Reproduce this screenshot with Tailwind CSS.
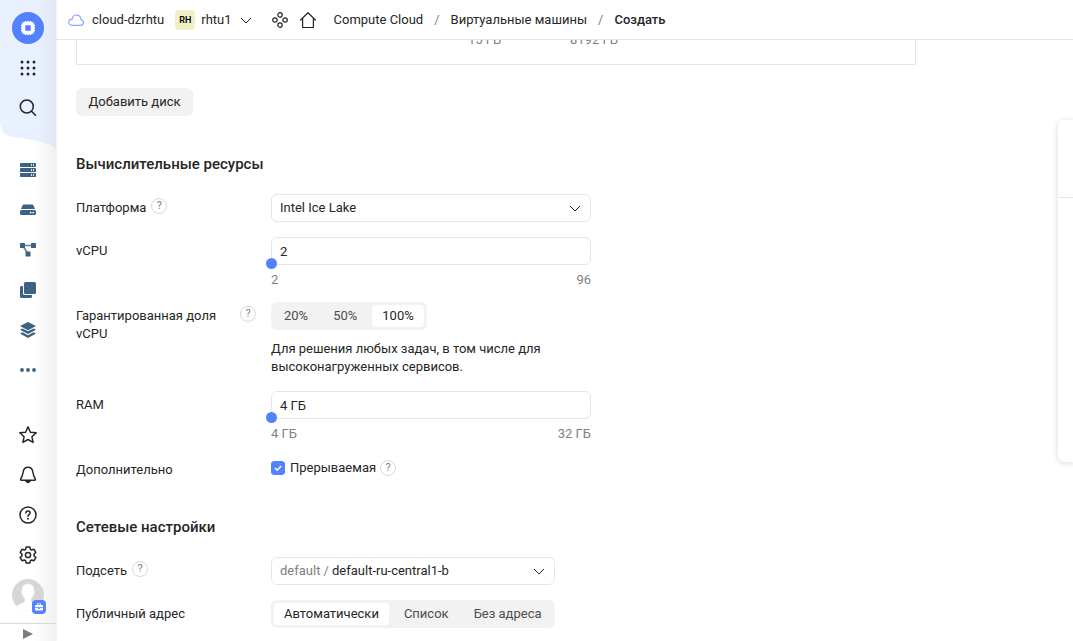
<!DOCTYPE html>
<html lang="ru">
<head>
<meta charset="utf-8">
<meta name="viewport" content="width=device-width, initial-scale=1">
<title>Compute Cloud — Создать</title>
<script src="https://cdn.jsdelivr.net/npm/@tailwindcss/browser@4"></script>
</head>
<body class="flex h-screen overflow-hidden bg-white font-['Roboto','Noto_Sans',sans-serif] text-[13px] leading-[18px] text-[#262626]">

<nav aria-label="Сервисы" class="relative z-20 flex w-14 shrink-0 flex-col bg-linear-to-r from-white from-60% to-[#f0f0f0] shadow-[0_0_2px_rgba(0,0,0,0.16)]">
  <svg class="absolute top-0 left-0 -z-10 h-[150px] w-full" viewBox="0 0 56 150" preserveAspectRatio="none" aria-hidden="true">
    <defs><linearGradient id="top" x1="0" x2="1"><stop offset="0" stop-color="#e9f1ff"/><stop offset=".7" stop-color="#e9f0fe"/><stop offset="1" stop-color="#dfe6f4"/></linearGradient></defs>
    <path fill="url(#top)" d="M0 0h56v149C48 142 36 140 14 137 5 136 1 132 0 122z"/>
  </svg>
  <div class="flex flex-col items-center pt-2">
    <a href="#" aria-label="Compute Cloud" class="my-1 grid size-8 place-items-center rounded-full bg-[#5282ff] text-white">
      <svg class="size-4" viewBox="0 0 16 16" fill="currentColor"><path fill-rule="evenodd" d="M4 2h.8V1h1.700v1H7.200V1h1.600v1h.7V1h1.700v1H12q2 0 2 2v.8h1v1.700h-1v.7h1v1.600h-1v.7h1v1.700h-1V12q0 2-2 2h-.8v1H9.500v-1h-.7v1H7.200v-1h-.7v1H4.800v-1H4q-2 0-2-2v-.8H1V9.500h1v-.7H1V7.200h1v-.7H1V4.800h1V4q0-2 2-2zm1.300 3.300v5.400h5.400V5.300z"/></svg>
    </a>
    <button aria-label="Все сервисы" class="grid size-10 place-items-center">
      <svg class="size-4" viewBox="0 0 16 16" fill="#262626"><circle cx="2" cy="2" r="1.500"/><circle cx="8" cy="2" r="1.500"/><circle cx="14" cy="2" r="1.500"/><circle cx="2" cy="8" r="1.500"/><circle cx="8" cy="8" r="1.500"/><circle cx="14" cy="8" r="1.500"/><circle cx="2" cy="14" r="1.500"/><circle cx="8" cy="14" r="1.500"/><circle cx="14" cy="14" r="1.500"/></svg>
    </button>
    <button aria-label="Поиск" class="grid size-10 place-items-center">
      <svg class="size-[18px]" viewBox="0 0 18 18" fill="none" stroke="#262626" stroke-width="1.500" stroke-linecap="round"><circle cx="7.800" cy="7.500" r="6.500"/><path d="m12.500 12.200 4 4"/></svg>
    </button>
  </div>
  <div class="mt-[22px] flex flex-col items-center text-[#3c6182]">
    <a href="#" aria-label="Виртуальные машины" class="grid size-10 place-items-center">
      <svg class="size-4" viewBox="0 0 16 16" fill="currentColor"><rect y="1" width="16" height="4" rx=".8"/><rect y="6" width="16" height="4" rx=".8"/><rect y="11" width="16" height="4" rx=".8"/><path stroke="#fff" stroke-opacity=".8" d="M11.500 2v2M13.500 2v2M11.500 7v2M13.500 7v2M11.500 12v2M13.500 12v2"/></svg>
    </a>
    <a href="#" aria-label="Диски" class="grid size-10 place-items-center">
      <svg class="size-4" viewBox="0 0 16 16" fill="currentColor"><path d="M4 2.500h8q1 0 1.500 1L15 7H1l1.500-3.500q.5-1 1.500-1zM1.500 8h13Q16 8 16 9.500v2q0 1.500-1.500 1.500h-13Q0 13 0 11.500v-2Q0 8 1.500 8z"/><circle cx="10.700" cy="10.600" r=".9" fill="#fff"/><circle cx="13.300" cy="10.600" r=".9" fill="#fff"/></svg>
    </a>
    <a href="#" aria-label="Балансировщики" class="grid size-10 place-items-center">
      <svg class="size-4" viewBox="0 0 16 16" fill="currentColor"><path fill="none" stroke="currentColor" stroke-opacity=".8" stroke-width="1.600" d="M3 3.500h10M3 4l4.500 7"/><rect y="1" width="5" height="5" rx=".6"/><rect x="11" y="1" width="5" height="5" rx=".6"/><rect x="5.500" y="9.500" width="5" height="5" rx=".6"/></svg>
    </a>
    <a href="#" aria-label="Образы" class="grid size-10 place-items-center">
      <svg class="size-4" viewBox="0 0 16 16" fill="currentColor"><rect x="4" width="12" height="12" rx="1.500"/><path d="M1.500 4H3v7.500Q3 13 4.500 13H12v1.500q0 1.500-1.500 1.500h-9Q0 16 0 14.500v-9Q0 4 1.500 4z"/></svg>
    </a>
    <a href="#" aria-label="Снимки" class="grid size-10 place-items-center">
      <svg class="size-4" viewBox="0 0 16 16" fill="currentColor"><path d="m8 0 8 4-8 4.200L0 4z"/><path d="m0 7.800 2.500-1.300L8 9.300l5.500-2.800L16 7.800 8 12z"/><path d="m0 11.600 2.500-1.300L8 13.200l5.500-2.900 2.500 1.300L8 16z"/></svg>
    </a>
    <button aria-label="Ещё" class="grid size-10 place-items-center">
      <svg class="size-4" viewBox="0 0 16 16" fill="currentColor"><circle cx="2" cy="8" r="1.900"/><circle cx="8" cy="8" r="1.900"/><circle cx="14" cy="8" r="1.900"/></svg>
    </button>
  </div>
  <div class="mt-auto flex flex-col items-center text-[#262626]">
    <button aria-label="Избранное" class="grid size-10 place-items-center">
      <svg class="size-[18px]" viewBox="0 0 18 18" fill="none" stroke="currentColor" stroke-width="1.500" stroke-linejoin="round"><path d="m9 .9 2.400 5.300 5.800.6-4.300 3.900 1.200 5.700L9 13.500l-5.100 2.900 1.200-5.700L.8 6.800l5.800-.6z"/></svg>
    </button>
    <button aria-label="Уведомления" class="grid size-10 place-items-center">
      <svg class="size-[18px]" viewBox="0 0 18 18" fill="none" stroke="currentColor" stroke-width="1.500" stroke-linejoin="round"><path d="M9 1.200c2.800 0 4.300 1.800 4.700 4.300.5 3.300 1 4.800 2.600 7.700.3.600 0 1-.6 1H2.300c-.6 0-.9-.4-.6-1 1.600-2.900 2.100-4.400 2.600-7.700C4.700 3 6.200 1.200 9 1.200z"/><path fill="currentColor" stroke="none" d="M6 14.800h6q-1 2.400-3 2.400t-3-2.400z"/></svg>
    </button>
    <button aria-label="Помощь" class="grid size-10 place-items-center">
      <svg class="size-[18px]" viewBox="0 0 18 18" fill="none" stroke="currentColor" stroke-width="1.500" stroke-linecap="round"><circle cx="9" cy="9" r="8"/><path d="M6.900 7.100c0-1.300.9-2.100 2.100-2.100s2.100.8 2.100 1.900c0 1.500-2.100 1.500-2.100 3.300"/><circle cx="9" cy="12.700" r=".95" fill="currentColor" stroke="none"/></svg>
    </button>
    <button aria-label="Настройки" class="grid size-10 place-items-center">
      <svg class="size-[18px]" viewBox="0 0 18 18" fill="none" stroke="currentColor" stroke-width="1.500" stroke-linejoin="round"><circle cx="9" cy="9" r="2.600"/><path d="M7.200.9h3.600l.6 2.400 1.200.7 2.400-.7 1.800 3.100L15 8.200v1.600l1.800 1.800-1.800 3.100-2.400-.7-1.200.7-.6 2.400H7.200l-.6-2.400-1.200-.7-2.400.7-1.800-3.100L3 9.800V8.200L1.200 6.400 3 3.300l2.400.7 1.200-.7z"/></svg>
    </button>
    <button aria-label="Профиль" class="relative mt-1 mb-3 size-8">
      <svg class="size-8" viewBox="0 0 32 32"><defs><clipPath id="av"><circle cx="16" cy="16" r="16"/></clipPath></defs><g clip-path="url(#av)"><path fill="#d6d6d6" d="M0 0h32v32H0z"/><path fill="#fff" stroke="#ececec" d="M16 5c4.500 0 6.200 3 6 7 1 .3.800 2.800-.6 3.500-.5 2.400-1.400 3.600-2.400 4.500 0 3 1 3.600 4 4.800 4 1.600 6 3 6 8.200H2c0-4 2-6.500 7-8.200 3-1.200 4-2 4-4.800-1-.9-1.900-2.100-2.400-4.500C9.200 14.800 9 12.300 10 12c-.2-4 1.500-7 6-7z"/></g></svg>
      <span class="absolute top-[21px] left-5 grid size-[14px] place-items-center rounded-sm bg-[#5282ff]">
        <svg class="size-2" viewBox="0 0 8 8"><path fill="#fff" fill-rule="evenodd" d="M2 2V.5h4V2h1q1 0 1 1v1.200H0V3q0-1 1-1zm.8-.8V2h2.400v-.8zM0 5h3v.7h2V5h3v1.500q0 1-1 1H1q-1 0-1-1z"/></svg>
      </span>
    </button>
  </div>
  <button aria-label="Развернуть" class="grid h-[18px] shrink-0 place-items-center border-t border-[#d9d9d9]">
    <svg class="mt-0.5 h-2.5 w-2.5" viewBox="0 0 10 10"><path fill="#7d7d7d" d="M0 0v10l10-5z"/></svg>
  </button>
</nav>

<div class="flex min-w-0 flex-1 flex-col">
  <header class="z-10 flex h-10 shrink-0 items-center border-b border-[#e5e5e5] bg-white pl-3">
    <svg class="h-4 w-4" viewBox="0 0 16 16" fill="none" stroke="#86a8ff" stroke-width="1.200"><path d="M3.800 13.400h8.400c4 0 4.300-5 .8-5.800C12.800 2 5 1.200 4.200 7.100-.5 7.400-.2 13.400 3.800 13.400z"/></svg>
    <a href="#" class="ml-2">cloud-dzrhtu</a>
    <span class="ml-[11px] grid size-5 place-items-center rounded-sm bg-[#eff0c8] text-[9px] font-semibold text-black">RH</span>
    <button class="ml-1.5 flex items-center gap-2">rhtu1
      <svg class="size-3" viewBox="0 0 12 12" fill="none" stroke="#262626"><path d="m1 4 5 5 5-5"/></svg>
    </button>
    <a href="#" aria-label="Организация" class="ml-5">
      <svg class="size-4" viewBox="0 0 16 16" fill="none" stroke="#262626" stroke-width="1.200"><circle cx="8" cy="2.900" r="2.200"/><circle cx="8" cy="13.100" r="2.200"/><circle cx="2.900" cy="8" r="2.200"/><circle cx="13.100" cy="8" r="2.200"/></svg>
    </a>
    <a href="#" aria-label="Главная" class="ml-3">
      <svg class="size-4" viewBox="0 0 16 16" fill="none" stroke="#262626" stroke-width="1.200" stroke-linecap="round" stroke-linejoin="round"><path d="M.6 8 8 .8 15.400 8M2.600 6.500v9h10.800v-9"/></svg>
    </a>
    <nav aria-label="Путь" class="ml-[18px] flex gap-[11px]">
      <a href="#">Compute Cloud</a><span class="text-[#808080]">/</span>
      <a href="#">Виртуальные машины</a><span class="text-[#808080]">/</span>
      <a href="#" aria-current="page" class="font-medium">Создать</a>
    </nav>
  </header>

  <main class="flex min-h-0 flex-1 items-start overflow-hidden">
    <form class="min-w-0 flex-1 pl-5">
      <div class="-mt-2.5 flex max-w-[840px] border border-[#e5e5e5] pb-[15px] text-[#808080]">
        <span class="ml-[391px] w-[102px]">15 ГБ</span><span>8192 ГБ</span>
      </div>
      <button type="button" class="mt-[23px] h-7 min-w-[117px] rounded-md bg-[#f2f2f2] px-3">Добавить диск</button>

      <h2 class="mt-[38px] mb-5 text-[15px] leading-5 font-medium">Вычислительные ресурсы</h2>

      <div class="mb-[15px] flex items-start">
        <div class="mr-[15px] flex w-[180px] shrink-0 items-start gap-[5px]">
          <label for="platform" class="pt-[5px]">Платформа</label>
          <button type="button" aria-label="Справка: платформа" class="mt-1 size-4 shrink-0 rounded-full border border-[#d9d9d9] text-[11px] leading-[14px] text-[#808080]">?</button>
        </div>
        <div class="relative w-80">
          <select id="platform" class="h-7 w-full appearance-none rounded-md border border-[#e5e5e5] bg-white px-2"><option>Intel Ice Lake</option></select>
          <svg class="pointer-events-none absolute top-2 right-2.5 size-3" viewBox="0 0 12 12" fill="none" stroke="#262626"><path d="m1 4 5 5 5-5"/></svg>
        </div>
      </div>

      <div class="mb-[15px] flex items-start">
        <label for="vcpu" class="mr-[15px] w-[180px] shrink-0 pt-[5px]">vCPU</label>
        <div class="relative w-80">
          <input id="vcpu" value="2" class="block h-7 w-full rounded-md border border-[#e5e5e5] bg-white px-2">
          <input type="range" aria-label="vCPU" min="2" max="96" value="2" class="absolute top-[21px] -left-[5px] h-[11px] w-[330px] appearance-none bg-transparent [&::-webkit-slider-thumb]:size-[11px] [&::-webkit-slider-thumb]:appearance-none [&::-webkit-slider-thumb]:rounded-full [&::-webkit-slider-thumb]:bg-[#5282ff]">
          <div class="mt-[7px] -mb-px flex justify-between leading-4 text-[#808080]"><span>2</span><span>96</span></div>
        </div>
      </div>

      <div class="mb-[15px] flex items-start">
        <div class="mr-[15px] flex w-[180px] shrink-0 items-start gap-[5px]">
          <span id="share" class="pt-[5px]">Гарантированная доля vCPU</span>
          <button type="button" aria-label="Справка: доля vCPU" class="mt-1 size-4 shrink-0 rounded-full border border-[#d9d9d9] text-[11px] leading-[14px] text-[#808080]">?</button>
        </div>
        <div class="w-80">
          <div role="radiogroup" aria-labelledby="share" class="inline-flex h-7 gap-[5px] rounded-md bg-[#f2f2f2] p-[3px] align-top leading-[22px] text-[#4d4d4d]">
            <label class="rounded-sm px-2.5 has-checked:bg-white has-checked:text-[#262626]"><input type="radio" name="share" class="sr-only">20%</label>
            <label class="rounded-sm px-2.5 has-checked:bg-white has-checked:text-[#262626]"><input type="radio" name="share" class="sr-only">50%</label>
            <label class="rounded-sm px-2.5 has-checked:bg-white has-checked:text-[#262626]"><input type="radio" name="share" class="sr-only" checked>100%</label>
          </div>
          <p class="mt-2.5">Для решения любых задач, в том числе для высоконагруженных сервисов.</p>
        </div>
      </div>

      <div class="mb-[15px] flex items-start">
        <label for="ram" class="mr-[15px] w-[180px] shrink-0 pt-[5px]">RAM</label>
        <div class="relative w-80">
          <input id="ram" value="4 ГБ" class="block h-7 w-full rounded-md border border-[#e5e5e5] bg-white px-2">
          <input type="range" aria-label="RAM" min="4" max="32" value="4" class="absolute top-[21px] -left-[5px] h-[11px] w-[330px] appearance-none bg-transparent [&::-webkit-slider-thumb]:size-[11px] [&::-webkit-slider-thumb]:appearance-none [&::-webkit-slider-thumb]:rounded-full [&::-webkit-slider-thumb]:bg-[#5282ff]">
          <div class="mt-[7px] -mb-px flex justify-between leading-4 text-[#808080]"><span>4 ГБ</span><span>32 ГБ</span></div>
        </div>
      </div>

      <div class="flex h-7 items-start">
        <span class="mr-[15px] w-[180px] shrink-0 pt-[5px]">Дополнительно</span>
        <div class="flex items-center pt-[3px]">
          <span class="relative size-[14px]">
            <input id="preempt" type="checkbox" checked class="block size-[14px] appearance-none rounded-[3px] border border-[#d9d9d9] checked:border-[#5282ff] checked:bg-[#5282ff]">
            <svg class="pointer-events-none absolute inset-0 size-[14px]" viewBox="0 0 14 14" fill="none" stroke="#fff" stroke-width="1.600"><path d="m4 7 2.200 2.200L10.200 5"/></svg>
          </span>
          <label for="preempt" class="ml-[5px]">Прерываемая</label>
          <button type="button" aria-label="Справка: прерываемая" class="ml-1 size-4 shrink-0 rounded-full border border-[#d9d9d9] text-[11px] leading-[14px] text-[#808080]">?</button>
        </div>
      </div>

      <h2 class="mt-[33px] mb-5 text-[15px] leading-5 font-medium">Сетевые настройки</h2>

      <div class="mb-[15px] flex items-start">
        <div class="mr-[15px] flex w-[180px] shrink-0 items-start gap-[5px]">
          <label for="subnet" class="pt-[5px]">Подсеть</label>
          <button type="button" aria-label="Справка: подсеть" class="mt-1 size-4 shrink-0 rounded-full border border-[#d9d9d9] text-[11px] leading-[14px] text-[#808080]">?</button>
        </div>
        <div class="relative flex h-7 w-[284px] items-center rounded-md border border-[#e5e5e5] px-2">
          <span class="mr-[3px] text-[#808080]">default /</span>
          <select id="subnet" class="h-full min-w-0 flex-1 appearance-none bg-transparent"><option>default-ru-central1-b</option></select>
          <svg class="pointer-events-none absolute right-[9px] size-3" viewBox="0 0 12 12" fill="none" stroke="#262626"><path d="m1 4 5 5 5-5"/></svg>
        </div>
      </div>

      <div class="flex items-start">
        <span id="address" class="mr-[15px] w-[180px] shrink-0 pt-[5px]">Публичный адрес</span>
        <div role="radiogroup" aria-labelledby="address" class="inline-flex h-7 gap-[5px] rounded-md bg-[#f2f2f2] p-[3px] leading-[22px] text-[#4d4d4d]">
          <label class="rounded-sm px-2.5 has-checked:bg-white has-checked:text-[#262626]"><input type="radio" name="address" class="sr-only" checked>Автоматически</label>
          <label class="rounded-sm px-2.5 has-checked:bg-white has-checked:text-[#262626]"><input type="radio" name="address" class="sr-only">Список</label>
          <label class="rounded-sm px-2.5 has-checked:bg-white has-checked:text-[#262626]"><input type="radio" name="address" class="sr-only">Без адреса</label>
        </div>
      </div>
    </form>
    <aside aria-label="Стоимость" class="mt-20 h-[342px] w-[15px] shrink-0 rounded-l-md bg-white shadow-[0_1px_6px_rgba(0,0,0,0.16)]">
      <div class="h-[78px] border-b border-[#e5e5e5]"></div>
    </aside>
  </main>
</div>
</body>
</html>
